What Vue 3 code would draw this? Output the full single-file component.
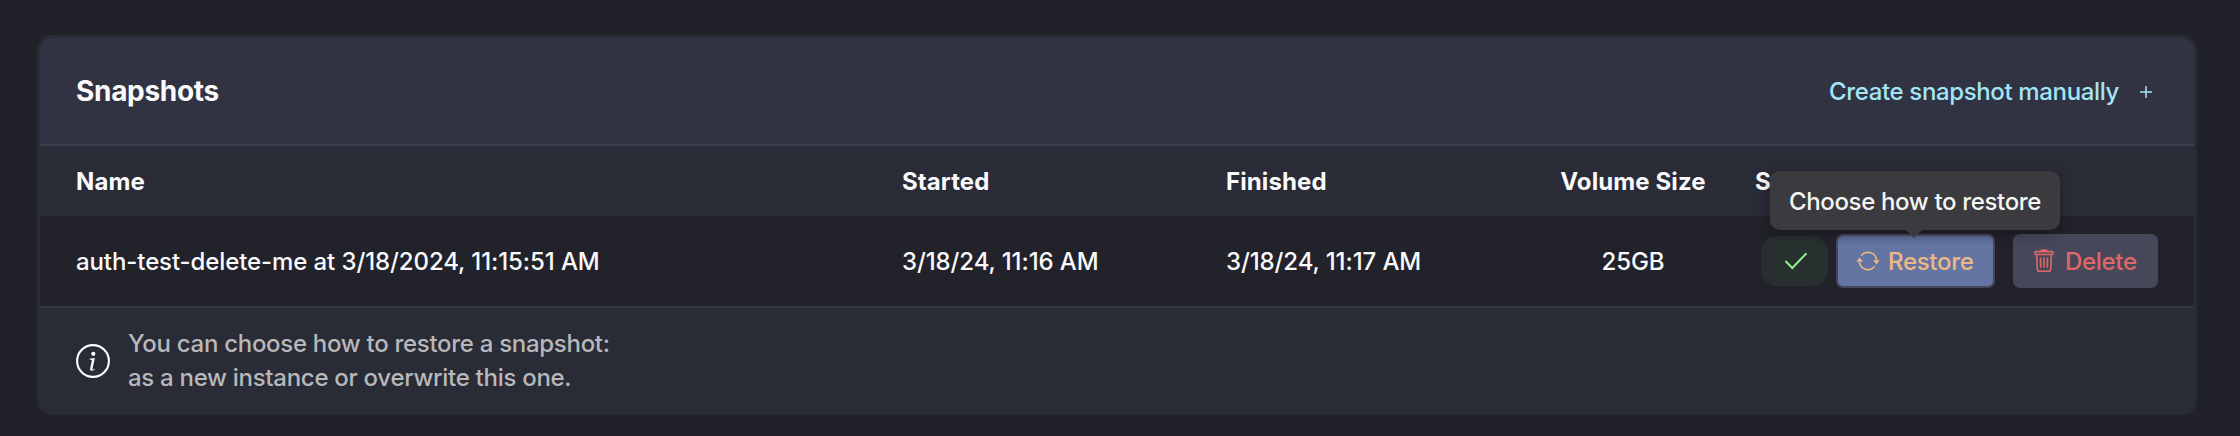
<script setup>
const snapshots = [
  {
    name: 'auth-test-delete-me at 3/18/2024, 11:15:51 AM',
    started: '3/18/24, 11:16 AM',
    finished: '3/18/24, 11:17 AM',
    size: '25GB',
  },
]
</script>

<template>
  <main class="page">
    <section class="panel">
      <header class="panel-head">
        <h2 class="title">Snapshots</h2>
        <a class="create">
          <span class="create-text">Create snapshot manually</span>
          <svg class="plus" viewBox="0 0 12 12"><path d="M6 0v12M0 6h12" /></svg>
        </a>
      </header>

      <div class="row labels">
        <span>Name</span>
        <span>Started</span>
        <span>Finished</span>
        <span class="center">Volume Size</span>
        <span class="status-label">Status</span>
      </div>

      <div v-for="s in snapshots" :key="s.name" class="row record">
        <span class="cell">{{ s.name }}</span>
        <span class="cell">{{ s.started }}</span>
        <span class="cell">{{ s.finished }}</span>
        <span class="cell center">{{ s.size }}</span>
        <div class="actions">
          <span class="badge">
            <svg class="check" viewBox="0 0 24 18"><path d="M1.5 9l6.8 7L22.5 1.2" /></svg>
          </span>
          <div class="restore-wrap">
            <button class="btn restore">
              <svg class="sync" viewBox="0 0 24 24">
                <path class="stroke" d="M5.3 6.6A8.6 8.6 0 0 1 20.6 11.5M18.7 17.4A8.6 8.6 0 0 1 3.4 12.5" />
                <path class="solid" d="M17.2 11.2h6.4l-3.2 4.2zM.4 12.8h6.4L3.6 8.6z" />
              </svg>
              <span class="btn-text">Restore</span>
            </button>
            <div class="tooltip">Choose how to restore</div>
          </div>
          <button class="btn delete">
            <svg class="trash" viewBox="0 0 20 24">
              <path d="M2.6 5.5l.8 14.9a2 2 0 0 0 2 1.9h9.2a2 2 0 0 0 2-1.9l.8-14.9" />
              <rect x="1" y="2.6" width="18" height="2.9" rx="1" />
              <path d="M7 2.4c0-.9.4-1.3 1.2-1.3h3.6c.8 0 1.2.4 1.2 1.3M6.4 8.6l.4 10.2M10 8.6v10.2M13.6 8.6l-.4 10.2" />
            </svg>
            <span class="btn-text">Delete</span>
          </button>
        </div>
      </div>

      <footer class="note">
        <svg class="info" viewBox="0 0 34 34">
          <circle cx="17" cy="17" r="15.9" />
          <circle class="fill" cx="17.3" cy="9.8" r="2.1" />
          <path class="fill" d="M13.7 14.8l5.2-.7-2.4 10.3c-.1.7.1 1 .6 1 .6 0 1.2-.3 1.9-1l-.2.9c-.8.9-1.8 1.4-2.9 1.4-1.5 0-2.1-.8-1.7-2.5l1.6-7.1c.2-.8 0-1.2-.9-1.3l-1.4-.2z" />
        </svg>
        <p>You can choose how to restore a snapshot:<br />as a new instance or overwrite this one.</p>
      </footer>
    </section>
  </main>
</template>

<style>
body {
  background: #21212a;
}
</style>

<style scoped>
.page {
  box-sizing: border-box;
  height: 436px;
  padding: 35px 43px 0 37px;
  background: #21212a;
  border-bottom: 1px solid #2a1d2b;
  font-family: Inter, 'Liberation Sans', sans-serif;
  font-size: 24px;
  font-weight: 500;
  line-height: 34px;
  color: #fafafc;
}
.panel {
  box-sizing: border-box;
  height: 380px;
  border: 3px solid #292b36;
  border-radius: 15px;
  background: #292b36;
}
.panel-head {
  display: flex;
  align-items: center;
  justify-content: space-between;
  height: 106px;
  box-sizing: content-box;
  padding: 0 42px 0 36px;
  background: #313342;
  border-bottom: 2px solid #3c3e50;
  border-radius: 13px 13px 0 0;
}
.title {
  margin: 0;
  padding-bottom: 1px;
  font-size: 28px;
  font-weight: 700;
  letter-spacing: -0.3px;
}
.create {
  display: flex;
  align-items: center;
  gap: 21px;
  color: #a3e5f5;
}
.create-text {
  padding-top: 2px;
  letter-spacing: -0.36px;
}
.plus {
  width: 12px;
  height: 12px;
  margin-top: 1px;
  fill: none;
  stroke: currentColor;
  stroke-width: 1.5;
}
.row {
  display: grid;
  grid-template-columns: 826px 324px 314px 186px 1fr;
  align-items: center;
  padding-left: 36px;
  white-space: nowrap;
}
.labels {
  box-sizing: border-box;
  height: 70px;
  padding-top: 2px;
  font-weight: 700;
  letter-spacing: 0.1px;
}
.record {
  height: 90px;
  background: #22222b;
  border-bottom: 2px solid #323442;
}
.cell {
  padding-top: 2px;
  letter-spacing: -0.1px;
}
.center {
  text-align: center;
}
.status-label {
  padding-left: 29px;
}
.actions {
  display: flex;
  align-items: center;
  padding-left: 35px;
}
.badge {
  display: flex;
  align-items: center;
  justify-content: center;
  width: 67px;
  height: 50px;
  margin-right: 8px;
  border-radius: 16px;
  background: #28302f;
}
.check {
  width: 24px;
  height: 18px;
  margin-left: 3px;
  fill: none;
  stroke: #8df08f;
  stroke-width: 2;
}
.restore-wrap {
  position: relative;
  margin-right: 18px;
}
.btn {
  display: flex;
  align-items: center;
  box-sizing: border-box;
  height: 54px;
  padding: 0 0 0 18px;
  border: 2px solid #46485a;
  border-radius: 7px;
  background: #46485a;
  font: inherit;
}
.btn-text {
  padding-top: 2px;
  letter-spacing: -0.3px;
}
.restore {
  width: 159px;
  gap: 8px;
  background: linear-gradient(#5a6897, #6475a4 10px);
  color: #edb886;
}
.delete {
  width: 145px;
  gap: 11px;
  padding-left: 19px;
  color: #e06666;
}
.sync {
  width: 24px;
  height: 24px;
}
.sync .stroke {
  fill: none;
  stroke: currentColor;
  stroke-width: 1.5;
}
.sync .solid {
  fill: currentColor;
}
.trash {
  width: 20px;
  height: 24px;
  fill: none;
  stroke: currentColor;
  stroke-width: 1.6;
}
.tooltip {
  position: absolute;
  left: -66px;
  bottom: 58px;
  box-sizing: border-box;
  width: 290px;
  height: 59px;
  border-radius: 10px;
  background: #3a3a3f;
  box-shadow: 0 4px 12px rgba(0, 0, 0, 0.3);
  color: #f5f5f3;
  line-height: 62px;
  letter-spacing: -0.34px;
  text-align: center;
}
.tooltip::after {
  content: '';
  position: absolute;
  top: 100%;
  left: 136px;
  border: 8px solid transparent;
  border-top-color: #3a3a3f;
  border-bottom: 0;
}
.note {
  display: flex;
  align-items: center;
  gap: 18px;
  height: 106px;
  padding-left: 36px;
  color: #b8b8ba;
}
.note p {
  margin: 0;
  letter-spacing: -0.29px;
}
.info {
  width: 34px;
  height: 34px;
  fill: none;
  stroke: #fff;
  stroke-width: 2.1;
}
.info .fill {
  fill: #fff;
  stroke: none;
}
</style>
